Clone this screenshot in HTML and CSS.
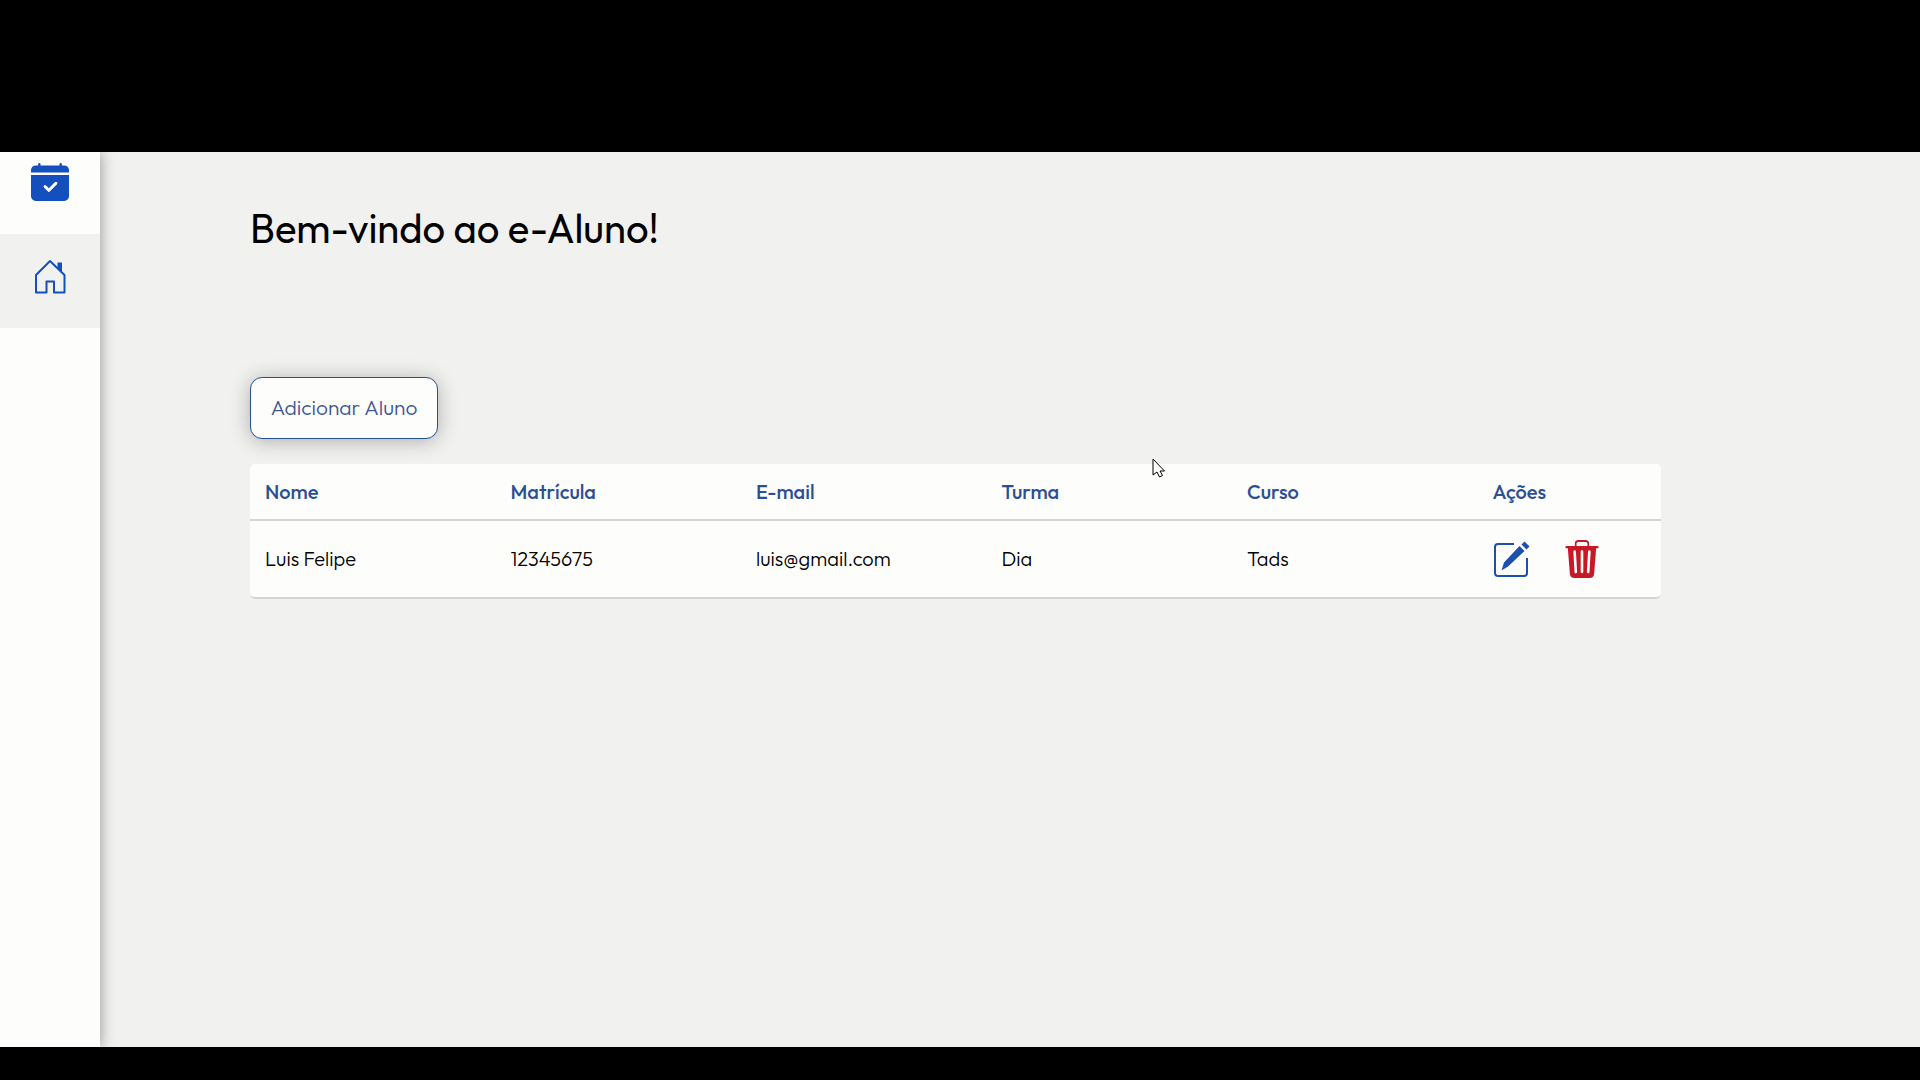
FILE: index.html
```html
<!DOCTYPE html>
<html lang="pt-BR">
<head>
<meta charset="utf-8">
<meta name="viewport" content="width=device-width, initial-scale=1">
<title>e-Aluno</title>
<link rel="stylesheet" href="styles.css">
</head>
<body>
<div class="app">
  <nav class="sidebar" aria-label="Menu principal">
    <a class="nav-item nav-item-first" href="#calendario" aria-label="Calendário">
      <svg width="38" height="38" viewBox="0 0 16 16" fill="currentColor"><path d="M4 .5a.5.5 0 0 0-1 0V1H2a2 2 0 0 0-2 2v1h16V3a2 2 0 0 0-2-2h-1V.5a.5.5 0 0 0-1 0V1H4V.5zM16 14V5H0v9a2 2 0 0 0 2 2h12a2 2 0 0 0 2-2zm-5.146-5.146-3 3a.5.5 0 0 1-.708 0l-1.500-1.500a.5.5 0 0 1 .708-.708L7.500 10.793l2.646-2.647a.5.5 0 0 1 .708.708z"/><path d="M5.900 9.900 7.500 11.500l3-3" fill="none" stroke="#fdfdfc" stroke-width="1.200" stroke-linecap="round" stroke-linejoin="round"/></svg>
    </a>
    <a class="nav-item nav-item-active" href="#inicio" aria-label="Início" aria-current="page">
      <svg width="38" height="38" viewBox="0 0 38 38" fill="none" stroke="currentColor" stroke-width="2"><path d="M5 17 19 3l14.500 14V34.500H23V23.500h-7.500v11H5z" stroke-linejoin="round"/><path d="M26.500 4.500h4.500v9.500l-4.500-4z" fill="currentColor" stroke="none"/></svg>
    </a>
  </nav>
  <main class="content">
    <h1 class="title">Bem-vindo ao e-Aluno!</h1>
    <button class="add-button" type="button">Adicionar Aluno</button>
    <table class="students">
      <colgroup><col class="col"><col class="col"><col class="col"><col class="col"><col class="col"><col></colgroup>
      <thead>
        <tr><th scope="col">Nome</th><th scope="col">Matrícula</th><th scope="col">E-mail</th><th scope="col">Turma</th><th scope="col">Curso</th><th scope="col">Ações</th></tr>
      </thead>
      <tbody>
        <tr>
          <td>Luis Felipe</td><td>12345675</td><td>luis@gmail.com</td><td>Dia</td><td>Tads</td>
          <td>
            <div class="actions">
              <button class="icon-button edit" type="button" aria-label="Editar">
                <svg width="38" height="38" viewBox="0 0 38 38" fill="currentColor"><path d="M21 4H5a3 3 0 0 0-3 3v26a3 3 0 0 0 3 3h26a3 3 0 0 0 3-3V18" fill="none" stroke="currentColor" stroke-width="2"/><path d="M26.500 6l5 5L15 26.500 8.500 30.500l2.500-8z"/><path d="M28.500 4.500 31.500 1.500l5 5-3 3z"/></svg>
              </button>
              <button class="icon-button delete" type="button" aria-label="Excluir">
                <svg width="38" height="38" viewBox="0 0 16 16"><path fill="currentColor" d="M11 1.500v1h3.500a.5.500 0 0 1 0 1h-.538l-.853 10.660A2 2 0 0 1 11.115 16h-6.230a2 2 0 0 1-1.994-1.840L2.038 3.500H1.500a.5.500 0 0 1 0-1H5v-1A1.500 1.500 0 0 1 6.500 0h3A1.500 1.500 0 0 1 11 1.500zm-5.300 0v1h4.600v-1a.7.700 0 0 0-.7-.7H6.400a.7.700 0 0 0-.7.700z"/><path d="M4.900 4.900l.5 8.600M8 4.900v8.600M11.100 4.900l-.5 8.600" stroke="#fdfdfc" stroke-width="1.100" stroke-linecap="round"/></svg>
              </button>
            </div>
          </td>
        </tr>
      </tbody>
    </table>
  </main>
</div>
<svg class="cursor" width="14" height="20" viewBox="0 0 14 20" aria-hidden="true"><path d="M1 1v16l4-3 2.500 5 3-1.500L8 13h4.500z" fill="#fff" stroke="#000"/></svg>
</body>
</html>
```
FILE: styles.css
```css
* {
  box-sizing: border-box;
}

body {
  margin: 0;
  padding: 152px 0 33px;
  background: #000;
  color: #000;
  font-family: Outfit, Lato, sans-serif;
  font-size: 20px;
  font-weight: 300;
  line-height: 24px;
}

.app {
  display: flex;
  min-height: calc(100vh - 185px);
  overflow: hidden;
  background: #f1f1f0;
}

.sidebar {
  flex: 0 0 100px;
  background: #fdfdfc;
  box-shadow: 0 0 14px rgba(0, 0, 0, 0.4);
}

.nav-item {
  display: flex;
  justify-content: center;
  height: 94px;
  padding-top: 24px;
  color: #1450bd;
}

.nav-item-first {
  height: 82px;
  padding-top: 11px;
}

.nav-item-active {
  background: #f1f1f0;
}

.content {
  flex: 1;
  padding: 52px 259px 0 150px;
}

.title {
  margin: 0 0 125px;
  font-size: 40px;
  font-weight: 400;
  line-height: 48px;
}

.add-button {
  display: block;
  width: 188px;
  height: 62px;
  margin-bottom: 25px;
  padding: 0 0 2px;
  border: 1px solid #24519b;
  border-radius: 12px;
  background: #fdfdfc;
  box-shadow: 0 2px 20px rgba(0, 0, 0, 0.28);
  color: #3d5795;
  font: inherit;
  font-size: 21px;
}

.students {
  width: 100%;
  table-layout: fixed;
  border-spacing: 0;
  border-radius: 5px;
  background: #fdfdfc;
  text-align: left;
}

.col {
  width: 17.4%;
}

.students th,
.students td {
  padding: 0 15px;
  border-bottom: 2px solid #d5d5d2;
}

.students th {
  height: 57px;
  color: #2c4f94;
  font-weight: 500;
}

.students td {
  height: 78px;
}

.students td:first-child {
  border-bottom-left-radius: 5px;
}

.students td:last-child {
  border-bottom-right-radius: 5px;
}

.actions {
  display: flex;
  gap: 32px;
}

.icon-button {
  display: flex;
  padding: 0;
  border: 0;
  background: none;
}

.edit {
  color: #1d4fae;
}

.delete {
  color: #c81825;
}

.cursor {
  position: absolute;
  top: 458px;
  left: 1152px;
}
```
